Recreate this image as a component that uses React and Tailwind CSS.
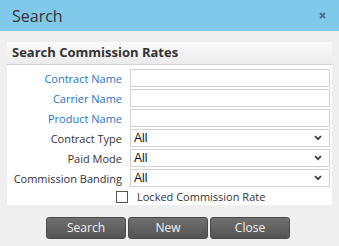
import React from "react";

const fields = [
  { label: "Contract Name", type: "text", required: true },
  { label: "Carrier Name", type: "text", required: true },
  { label: "Product Name", type: "text", required: true },
  { label: "Contract Type", type: "select" },
  { label: "Paid Mode", type: "select" },
  { label: "Commission Banding", type: "select" },
];

const Chevron = () => (
  <svg width="8" height="6" viewBox="0 0 8 6" className="text-[#444]">
    <path d="M1 1.2 L4 4.2 L7 1.2" fill="none" stroke="currentColor" strokeWidth="1.9" />
  </svg>
);

const CloseX = () => (
  <svg width="7" height="7" viewBox="0 0 7 7" className="text-[#4d7486]">
    <path d="M1 1 L6 6 M6 1 L1 6" fill="none" stroke="currentColor" strokeWidth="1.8" />
  </svg>
);

const FieldRow = ({ field }) => (
  <div className="flex items-center h-[18px]">
    <label
      className={`w-[123px] pr-[8px] text-right text-[11px] leading-none ${
        field.required ? "text-[#1f74c4]" : "text-[#333]"
      }`}
    >
      {field.label}
    </label>
    {field.type === "text" ? (
      <input
        type="text"
        className="w-[200px] h-[18px] border border-[#d2d2d2] bg-white outline-none"
      />
    ) : (
      <div className="w-[200px] h-[18px] border border-[#d2d2d2] bg-white flex items-center justify-between pl-[3px] pr-[7px]">
        <span className="text-[12px] text-[#111] font-['Liberation_Sans',Arial,sans-serif]">All</span>
        <Chevron />
      </div>
    )}
  </div>
);

const Button = ({ children }) => (
  <button className="w-[80px] h-[22px] rounded-[3px] bg-gradient-to-b from-[#707070] to-[#545454] border border-[#4a4a4a] text-[12px] text-[#f2f2f2] leading-none">
    {children}
  </button>
);

export default function App() {
  return (
    <div className="w-[339px] h-[246px] bg-[#efefef] font-['Open_Sans',sans-serif] flex flex-col overflow-hidden">
      {/* title bar */}
      <div className="h-[31px] bg-[#80c9ea] flex items-center justify-between pl-[12px] pr-[13px] shrink-0">
        <span className="text-[16px] text-[#333]">Search</span>
        <CloseX />
      </div>

      {/* panel */}
      <div className="mt-[11px] mx-[7px] flex flex-col">
        <div className="h-[23px] bg-gradient-to-b from-[#fbfbfb] to-[#ebebeb] border-b border-[#d4d4d4] flex items-center pl-[5px]">
          <span className="text-[13px] font-bold text-[#333]">Search Commission Rates</span>
        </div>
        <div className="bg-white pt-[4px] pr-[2px] flex flex-col gap-[2px]">
          {fields.map((f) => (
            <FieldRow key={f.label} field={f} />
          ))}
          <div className="flex items-center h-[16px]">
            <div className="w-[109px]" />
            <div className="w-[12px] h-[12px] border border-[#555] bg-white" />
            <span className="ml-[9px] text-[11px] text-[#333]">Locked Commission Rate</span>
          </div>
        </div>
      </div>

      {/* buttons */}
      <div className="mt-[12px] flex gap-[2px] pl-[46px]">
        <Button>Search</Button>
        <Button>New</Button>
        <Button>Close</Button>
      </div>
    </div>
  );
}
